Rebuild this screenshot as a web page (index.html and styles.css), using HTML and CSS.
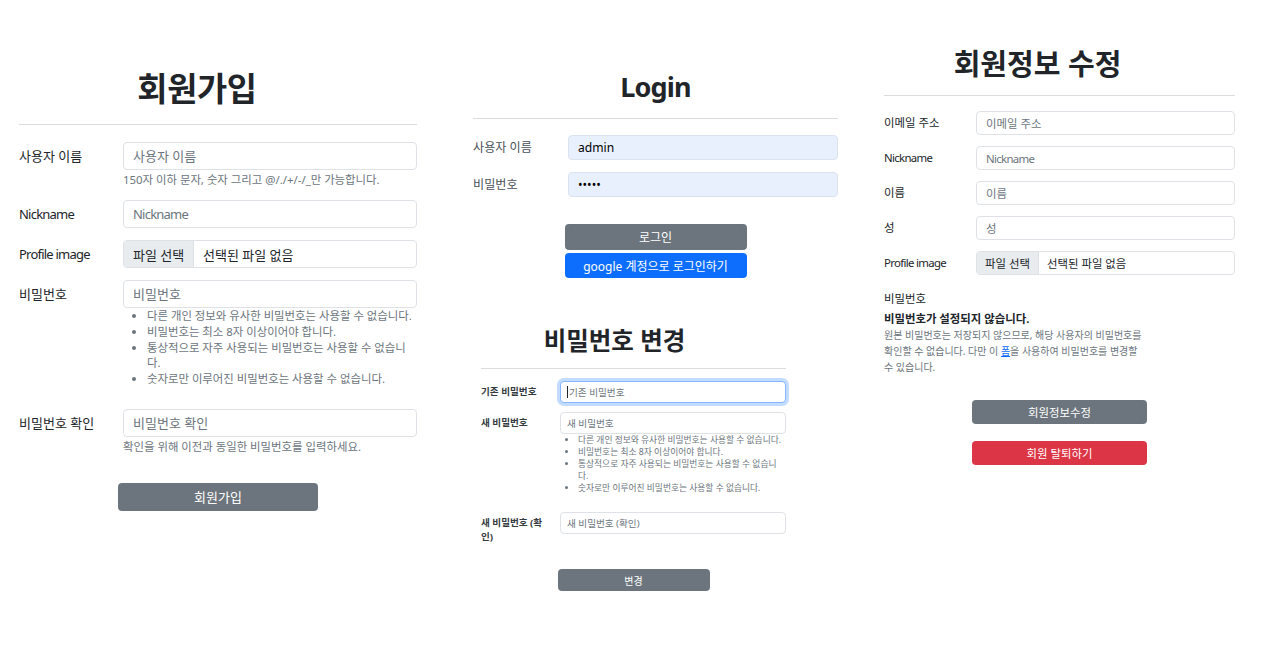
FILE: index.html
```html
<!DOCTYPE html>
<html lang="ko">
<head>
<meta charset="utf-8">
<title>회원 페이지</title>
<link rel="stylesheet" href="styles.css">
</head>
<body>
<main class="page">
  <section class="panel signup">
    <h1 class="title">회원가입</h1>
    <hr class="rule">
    <div class="row">
      <label class="label">사용자 이름</label>
      <div class="field">
        <input class="input" placeholder="사용자 이름">
        <div class="help">150자 이하 문자, 숫자 그리고 @/./+/-/_만 가능합니다.</div>
      </div>
    </div>
    <div class="row">
      <label class="label en">Nickname</label>
      <div class="field"><input class="input en" placeholder="Nickname"></div>
    </div>
    <div class="row">
      <label class="label en">Profile image</label>
      <div class="field">
        <div class="input file"><span class="file-btn">파일 선택</span><span class="file-name">선택된 파일 없음</span></div>
      </div>
    </div>
    <div class="row">
      <label class="label">비밀번호</label>
      <div class="field">
        <input class="input" placeholder="비밀번호">
        <ul class="rules">
          <li>다른 개인 정보와 유사한 비밀번호는 사용할 수 없습니다.</li>
          <li>비밀번호는 최소 8자 이상이어야 합니다.</li>
          <li>통상적으로 자주 사용되는 비밀번호는 사용할 수 없습니다.</li>
          <li>숫자로만 이루어진 비밀번호는 사용할 수 없습니다.</li>
        </ul>
      </div>
    </div>
    <div class="row">
      <label class="label">비밀번호 확인</label>
      <div class="field">
        <input class="input" placeholder="비밀번호 확인">
        <div class="help">확인을 위해 이전과 동일한 비밀번호를 입력하세요.</div>
      </div>
    </div>
    <div class="actions">
      <button class="btn btn-gray">회원가입</button>
    </div>
  </section>

  <section class="panel middle">
    <div class="login">
      <h1 class="title">Login</h1>
      <hr class="rule">
      <div class="row">
        <label class="label">사용자 이름</label>
        <div class="field"><input class="input filled" value="admin"></div>
      </div>
      <div class="row">
        <label class="label">비밀번호</label>
        <div class="field"><input class="input filled" type="password" value="12345"></div>
      </div>
      <div class="actions">
        <button class="btn btn-gray">로그인</button>
        <button class="btn btn-blue">google 계정으로 로그인하기</button>
      </div>
    </div>

    <div class="pwchange">
      <h1 class="title">비밀번호 변경</h1>
      <hr class="rule">
      <div class="row">
        <label class="label">기존 비밀번호</label>
        <div class="field"><div class="input focused"><span class="caret"></span><span class="ph">기존 비밀번호</span></div></div>
      </div>
      <div class="row">
        <label class="label">새 비밀번호</label>
        <div class="field">
          <input class="input" placeholder="새 비밀번호">
          <ul class="rules">
            <li>다른 개인 정보와 유사한 비밀번호는 사용할 수 없습니다.</li>
            <li>비밀번호는 최소 8자 이상이어야 합니다.</li>
            <li>통상적으로 자주 사용되는 비밀번호는 사용할 수 없습니다.</li>
            <li>숫자로만 이루어진 비밀번호는 사용할 수 없습니다.</li>
          </ul>
        </div>
      </div>
      <div class="row">
        <label class="label">새 비밀번호 (확인)</label>
        <div class="field"><input class="input" placeholder="새 비밀번호 (확인)"></div>
      </div>
      <div class="actions">
        <button class="btn btn-gray">변경</button>
      </div>
    </div>
  </section>

  <section class="panel profile">
    <h1 class="title">회원정보 수정</h1>
    <hr class="rule">
    <div class="row">
      <label class="label">이메일 주소</label>
      <div class="field"><input class="input" placeholder="이메일 주소"></div>
    </div>
    <div class="row">
      <label class="label en">Nickname</label>
      <div class="field"><input class="input en" placeholder="Nickname"></div>
    </div>
    <div class="row">
      <label class="label">이름</label>
      <div class="field"><input class="input" placeholder="이름"></div>
    </div>
    <div class="row">
      <label class="label">성</label>
      <div class="field"><input class="input" placeholder="성"></div>
    </div>
    <div class="row">
      <label class="label en">Profile image</label>
      <div class="field">
        <div class="input file"><span class="file-btn">파일 선택</span><span class="file-name">선택된 파일 없음</span></div>
      </div>
    </div>
    <div class="pw-label">비밀번호</div>
    <div class="pw-strong">비밀번호가 설정되지 않습니다.</div>
    <p class="pw-help">원본 비밀번호는 저장되지 않으므로, 해당 사용자의 비밀번호를 확인할 수 없습니다. 다만 이 <a href="#" class="link">폼</a>을 사용하여 비밀번호를 변경할 수 있습니다.</p>
    <div class="actions">
      <button class="btn btn-gray">회원정보수정</button>
      <button class="btn btn-red">회원 탈퇴하기</button>
    </div>
  </section>
</main>
</body>
</html>
```

FILE: styles.css
```css
* { box-sizing: border-box; }

html, body {
  margin: 0;
  background: #ffffff;
}

body {
  font-family: "Noto Sans", "Noto Sans CJK KR", sans-serif;
  color: #212529;
}

.en { letter-spacing: -0.06em; }

.page {
  display: flex;
  align-items: flex-start;
  padding-left: 19px;
}

.title {
  margin: 0;
  font-weight: 700;
  text-align: center;
  color: #212529;
}

.rule {
  border: 0;
  border-top: 1px solid #dcdcdc;
  margin: 0;
  height: 0;
}

.row {
  display: flex;
  align-items: flex-start;
}

.label {
  flex: none;
}

.field {
  flex: 1;
  min-width: 0;
}

.input {
  display: block;
  width: 100%;
  border: 1px solid #dee2e6;
  border-radius: 4px;
  background: #ffffff;
  font: inherit;
  color: #212529;
  outline: none;
  margin: 0;
}

.input.en { letter-spacing: -0.06em; }

.input::placeholder {
  color: #6c757d;
  opacity: 1;
}

.help {
  color: #6c757d;
}

.rules {
  margin: 0;
  color: #6c757d;
  list-style: disc;
}

.input.file {
  display: flex;
  align-items: stretch;
  padding: 0;
  overflow: hidden;
}

.file-btn {
  flex: none;
  display: flex;
  align-items: center;
  background: #e9ecef;
  border-right: 1px solid #dee2e6;
}

.file-name {
  display: flex;
  align-items: center;
}

.actions {
  display: flex;
  flex-direction: column;
  align-items: center;
}

.btn {
  border: 0;
  border-radius: 4px;
  color: #ffffff;
  font-family: inherit;
  padding: 0;
  cursor: pointer;
}

.btn-gray { background: #6c757d; }
.btn-blue { background: #0d6efd; }
.btn-red { background: #dc3545; }

/* ---------- sign up ---------- */
.signup {
  width: 398px;
  padding-top: 70px;
  font-size: 13px;
}

.signup .title {
  font-size: 32.8px;
  line-height: 38px;
  letter-spacing: -0.01em;
  padding-right: 42px;
}

.signup .rule {
  margin-top: 16px;
  margin-bottom: 17px;
}

.signup .row { margin-bottom: 12px; }

.signup .label {
  width: 104px;
  line-height: 28px;
}

.signup .input {
  height: 28px;
  padding: 0 9px;
}

.signup .input.file { padding: 0; }

.signup .help {
  font-size: 11.4px;
  line-height: 16px;
  margin-top: 2px;
}

.signup .rules {
  font-size: 11.4px;
  line-height: 15.8px;
  padding-left: 24px;
  margin-bottom: 10px;
}

.signup .file-btn {
  width: 70px;
  padding-left: 9px;
}

.signup .file-name { padding-left: 9px; }

.signup .actions { margin-top: 28px; }

.signup .btn {
  width: 200px;
  height: 28px;
  font-size: 13px;
}

/* ---------- middle column ---------- */
.middle {
  width: 365px;
  margin-left: 56px;
  padding-top: 70px;
}

.login { font-size: 12.1px; }

.login .title {
  font-size: 27px;
  line-height: 34px;
  letter-spacing: -0.03em;
}

.login .rule {
  margin-top: 14px;
  margin-bottom: 16px;
}

.login .row { margin-bottom: 12px; }

.login .label {
  width: 95px;
  line-height: 25px;
  color: #495057;
}

.login .input {
  height: 25px;
  padding: 0 9px;
}

.login .input.filled {
  background: #e8f0fe;
  border-color: #dbe3ef;
  color: #000000;
}

.login .actions {
  margin-top: 27px;
  gap: 3px;
}

.login .btn {
  width: 182px;
  height: 26px;
  font-size: 12px;
}

.login .btn-blue { height: 25px; }

.pwchange {
  width: 305px;
  margin-left: 8px;
  margin-top: 48px;
  font-size: 9.6px;
}

.pwchange .title {
  font-size: 24.5px;
  line-height: 30px;
  padding-right: 38px;
}

.pwchange .rule {
  margin-top: 12px;
  margin-bottom: 12px;
}

.pwchange .row { margin-bottom: 9px; }

.pwchange .label {
  width: 79px;
  padding-right: 11px;
  padding-top: 4px;
  line-height: 14px;
  font-weight: 700;
  color: #343a40;
}

.pwchange .input {
  height: 22px;
  padding: 0 6px;
}

.pwchange .input.focused {
  border-color: #86b7fe;
  box-shadow: 0 0 0 3px rgba(13, 110, 253, 0.25);
  display: flex;
  align-items: center;
  padding-left: 6px;
}

.caret {
  display: inline-block;
  width: 1px;
  height: 12px;
  background: #212529;
  margin-right: 1px;
}

.ph { color: #6c757d; }

.pwchange .rules {
  font-size: 8.74px;
  line-height: 12px;
  padding-left: 18px;
  margin-bottom: 9px;
}

.pwchange .actions { margin-top: 25px; }

.pwchange .btn {
  width: 152px;
  height: 22px;
  font-size: 10px;
}

/* ---------- profile ---------- */
.profile {
  width: 351px;
  margin-left: 46px;
  padding-top: 47px;
  font-size: 11.4px;
}

.profile .title {
  font-size: 29px;
  line-height: 34px;
  padding-right: 44px;
}

.profile .rule {
  margin-top: 14px;
  margin-bottom: 15px;
}

.profile .row { margin-bottom: 11px; }

.profile .label {
  width: 92px;
  line-height: 24px;
}

.profile .input {
  height: 24px;
  padding: 0 9px;
}

.profile .input.file { padding: 0; }

.profile .file-btn {
  width: 62px;
  padding-left: 8px;
}

.profile .file-name { padding-left: 8px; }

.pw-label {
  margin-top: 16px;
  line-height: 16px;
}

.pw-strong {
  margin-top: 4px;
  line-height: 16px;
  font-weight: 700;
}

.pw-help {
  margin: 0;
  width: 262px;
  font-size: 10px;
  line-height: 16px;
  color: #6c757d;
}

.link {
  color: #0d6efd;
  text-decoration: underline;
}

.profile .actions {
  margin-top: 25px;
  gap: 17px;
}

.profile .btn {
  width: 175px;
  height: 24px;
  font-size: 11.4px;
}
```
